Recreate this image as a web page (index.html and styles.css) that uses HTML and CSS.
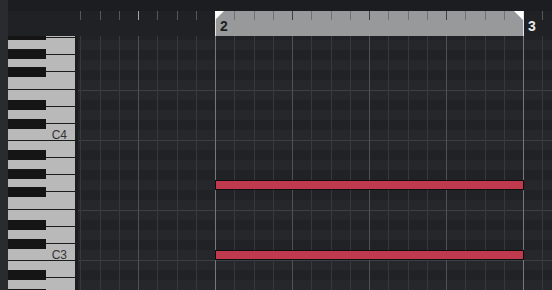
FILE: index.html
```html
<!DOCTYPE html>
<html lang="en">
<head>
  <meta charset="UTF-8" />
  <title>Key Editor</title>
  <link rel="stylesheet" href="styles.css">
</head>
<body>
  <div class="editor">
    <div class="edge"></div>

    <div class="main">
      <div class="topbar"></div>

      <!-- Линейка тактов -->
      <div class="ruler">
        <div class="ruler-pad"></div>
        <div class="ruler-track">
          <div class="ticks">
            <span class="tick beat"></span><span class="tick"></span><span class="tick"></span><span class="tick"></span>
            <span class="tick beat"></span><span class="tick"></span><span class="tick"></span><span class="tick"></span>
            <span class="tick bar"></span><span class="tick"></span><span class="tick"></span><span class="tick"></span>
            <span class="tick"></span><span class="tick"></span><span class="tick"></span><span class="tick"></span>
            <span class="tick"></span><span class="tick"></span><span class="tick"></span><span class="tick"></span>
            <span class="tick"></span><span class="tick"></span><span class="tick"></span><span class="tick"></span>
            <span class="tick bar"><b class="bar-num">3</b></span><span class="tick"></span>
          </div>

          <div class="cycle">
            <span class="tick bar"><b class="bar-num">2</b></span><span class="tick"></span><span class="tick"></span><span class="tick"></span>
            <span class="tick beat"></span><span class="tick"></span><span class="tick"></span><span class="tick"></span>
            <span class="tick beat"></span><span class="tick"></span><span class="tick"></span><span class="tick"></span>
            <span class="tick beat"></span><span class="tick"></span><span class="tick"></span><span class="tick"></span>
          </div>
        </div>
      </div>

      <div class="body">
        <!-- Клавиатура -->
        <div class="keys">
          <div class="white"></div>
          <div class="white"><i class="black as"></i></div>
          <div class="white"><i class="black gs"></i></div>
          <div class="white"><i class="black fs"></i></div>
          <div class="white"></div>
          <div class="white"><i class="black ds"></i></div>
          <div class="white"><i class="black cs"></i><span class="key-name">C4</span></div>
          <div class="white"></div>
          <div class="white"><i class="black as"></i></div>
          <div class="white"><i class="black gs"></i></div>
          <div class="white"><i class="black fs"></i></div>
          <div class="white"></div>
          <div class="white"><i class="black ds"></i></div>
          <div class="white"><i class="black cs"></i><span class="key-name">C3</span></div>
          <div class="white"></div>
          <div class="white"><i class="black as"></i></div>
          <div class="white"><i class="black gs"></i></div>
        </div>
        <div class="keys-sep"></div>

        <!-- Сетка нот -->
        <div class="grid">
          <div class="cols">
            <div class="col beat"></div><div class="col"></div><div class="col"></div><div class="col"></div>
            <div class="col beat"></div><div class="col"></div><div class="col"></div><div class="col"></div>
            <div class="col bar"></div><div class="col"></div><div class="col"></div><div class="col"></div>
            <div class="col beat"></div><div class="col"></div><div class="col"></div><div class="col"></div>
            <div class="col beat"></div><div class="col"></div><div class="col"></div><div class="col"></div>
            <div class="col beat"></div><div class="col"></div><div class="col"></div><div class="col"></div>
            <div class="col bar"></div><div class="col"></div>
          </div>

          <div class="note" style="top:144px; left:137px; width:309px;"></div>
          <div class="note" style="top:214px; left:137px; width:309px;"></div>
        </div>
      </div>
    </div>
  </div>
</body>
</html>
```

FILE: styles.css
```css
/* Общие */
html, body {
  margin: 0;
  padding: 0;
  width: 552px;
  height: 290px;
  overflow: hidden;
  background: #1c1d20;
  font-family: 'Liberation Sans', Arial, sans-serif;
}

.editor {
  display: flex;
  height: 290px;
}

.edge {
  width: 8px;
  flex-shrink: 0;
  background: #2a2b2e;
}

.main {
  flex: 1;
  display: flex;
  flex-direction: column;
  min-width: 0;
}

.topbar {
  height: 11px;
  flex-shrink: 0;
  background: #1c1d20;
}

/* Линейка */
.ruler {
  height: 25px;
  flex-shrink: 0;
  display: flex;
  background: #202124;
}
.ruler-pad {
  width: 70px;
  flex-shrink: 0;
}
.ruler-track {
  flex: 1;
  position: relative;
  overflow: hidden;
}
.ticks {
  display: flex;
  height: 100%;
  margin-left: -17px;
}
.tick {
  flex: none;
  box-sizing: border-box;
  width: 19.25px;
  height: 9px;
  border-left: 1px solid #55575a;
}
.tick.beat {
  border-left-color: #a5a6a8;
}
.tick.bar {
  height: 100%;
  border-left-color: #e6e6e6;
  display: flex;
  align-items: flex-end;
}
.bar-num {
  padding: 0 0 3px 4px;
  font-size: 14px;
  line-height: 14px;
  font-weight: 700;
  color: #e8e8e8;
}

/* Цикл */
.cycle {
  position: absolute;
  top: 0;
  left: 137px;
  width: 308px;
  height: 100%;
  display: flex;
  background: #98999b;
}
.cycle .tick {
  border-left-color: #717274;
}
.cycle .tick.beat {
  border-left-color: #3f4042;
}
.cycle .tick.bar {
  border-left-color: #e6e6e6;
}
.cycle .bar-num {
  color: #1e1e1e;
}
.cycle::before,
.cycle::after {
  content: "";
  position: absolute;
  top: 0;
  width: 9px;
  height: 9px;
  background: #ffffff;
}
.cycle::before {
  left: 0;
  clip-path: polygon(0 0, 100% 0, 0 100%);
}
.cycle::after {
  right: 0;
  clip-path: polygon(0 0, 100% 0, 100% 100%);
}

/* Основная область */
.body {
  flex: 1;
  display: flex;
  min-height: 0;
}

/* Клавиатура */
.keys {
  width: 67px;
  flex-shrink: 0;
  overflow: hidden;
  background: #b9b9b9;
}
.white {
  position: relative;
  box-sizing: border-box;
  height: 17.142857px;
  border-top: 1px solid #1c1c1c;
  display: flex;
  align-items: flex-end;
  justify-content: flex-end;
}
.white:first-child {
  margin-top: -16px;
}
.black {
  position: absolute;
  left: 0;
  width: 38px;
  height: 10px;
  background: #151515;
}
.black.cs { top: -5px; }
.black.ds { top: -7px; }
.black.fs { top: -5px; }
.black.gs { top: -6px; }
.black.as { top: -8px; }
.key-name {
  margin-bottom: -1px;
  padding-right: 8px;
  font-size: 12px;
  line-height: 12px;
  color: #333333;
}
.keys-sep {
  width: 3px;
  flex-shrink: 0;
  background: #1c1d20;
}

/* Сетка */
.grid {
  flex: 1;
  position: relative;
  overflow: hidden;
  background-color: #25272b;
  background-image: linear-gradient(to bottom,
    #3c3f43 0, #3c3f43 1px,
    #25272b 1px, #25272b 10px,
    #202226 10px, #202226 20px,
    #25272b 20px, #25272b 30px,
    #202226 30px, #202226 40px,
    #25272b 40px, #25272b 50px,
    #202226 50px, #202226 60px,
    #25272b 60px, #25272b 70px,
    #3c3f43 70px, #3c3f43 71px,
    #25272b 71px, #25272b 80px,
    #202226 80px, #202226 90px,
    #25272b 90px, #25272b 100px,
    #202226 100px, #202226 110px,
    #25272b 110px, #25272b 120px);
  background-size: 100% 120px;
  background-position: 0 -16px;
}
.cols {
  display: flex;
  height: 100%;
  margin-left: -17px;
}
.col {
  flex: none;
  box-sizing: border-box;
  width: 19.25px;
  height: 100%;
  border-left: 1px solid #35383c;
}
.col.beat {
  border-left-color: #4e5155;
}
.col.bar {
  border-left-color: #76787c;
}

/* Ноты */
.note {
  position: absolute;
  box-sizing: border-box;
  height: 10px;
  background: #c03a4f;
  border: 1px solid #0e0e0e;
}
```
